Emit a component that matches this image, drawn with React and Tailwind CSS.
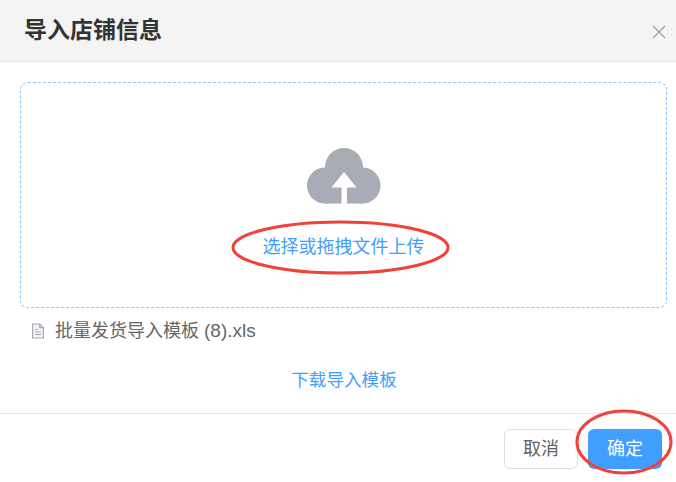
import React from "react";

const font = "font-['Liberation_Sans','Noto_Sans_CJK_SC',sans-serif]";

const CloudIcon = () => (
  <svg width="74" height="56" viewBox="0 0 74 56" className="block">
    <g fill="#A9ACB4">
      <circle cx="18" cy="37.500" r="18" />
      <circle cx="55.500" cy="37.500" r="18" />
      <circle cx="37" cy="19" r="19" />
      <rect x="18" y="28" width="37.500" height="27.500" />
    </g>
    <path d="M37 24L49.500 39.500H40V56H34.500V39.500H24.500Z" fill="#fff" />
  </svg>
);

const FileIcon = () => (
  <svg width="14" height="16" viewBox="0 0 14 16" fill="none" stroke="#A6A8AF" strokeWidth="1.200">
    <path d="M1.600 1H8.800L12.400 4.600V15H1.600Z" fill="#F4F4F6" />
    <path d="M8.800 1V4.600H12.400" />
    <path d="M4 6.500H7M4 9H10M4 11.500H10" />
  </svg>
);

const App = () => {
  return (
    <div className={`relative w-[676px] h-[482px] overflow-hidden bg-white ${font}`}>
      <div className="h-[62px] bg-[#F4F4F4] border-b border-[#E8E8E8] flex items-center justify-between pl-6 pr-[10px]">
        <h1 className="text-[23px] font-bold text-[#333]">导入店铺信息</h1>
        <svg width="14" height="14" viewBox="0 0 14 14" stroke="#9A9AA0" strokeWidth="1.100" className="mt-[2px]">
          <path d="M1 1L13 13M13 1L1 13" />
        </svg>
      </div>

      <div className="px-5 pt-5">
        <div className="w-[647px] h-[226px] rounded-lg border border-dashed border-[#8CC5FF] flex flex-col items-center pt-[65px]">
          <CloudIcon />
          <span className="mt-[31px] text-[18px] leading-[24px] text-[#409EFF]">选择或拖拽文件上传</span>
        </div>
        <div className="mt-[12px] pl-[11px] flex items-center gap-[10px] text-[#666]">
          <FileIcon />
          <span className="text-[18px] leading-[22px]">
            批量发货导入模板 <span className="text-[19px]">(8).xls</span>
          </span>
        </div>
        <div className="mt-[26px] text-center pl-[12px] text-[17.600px] leading-[24px] text-[#409EFF]">下载导入模板</div>
      </div>

      <div className="absolute left-0 right-0 top-[413px] border-t border-[#E8E8E8] flex justify-end gap-[10px] pt-[15px] pr-[14px]">
        <button className="w-[74px] h-[40px] rounded-md border border-[#DCDFE6] bg-white text-[18px] text-[#606266]">取消</button>
        <button className="w-[74px] h-[40px] rounded-md bg-[#409EFF] text-[18px] text-white">确定</button>
      </div>

      {/* red annotation rings */}
      <svg width="676" height="482" className="absolute inset-0 pointer-events-none" fill="none" stroke="#F0423A" strokeWidth="3">
        <ellipse cx="340.500" cy="247.500" rx="107.500" ry="25.500" />
        <ellipse cx="624" cy="442" rx="47" ry="31" />
      </svg>
    </div>
  );
};

export default App;
